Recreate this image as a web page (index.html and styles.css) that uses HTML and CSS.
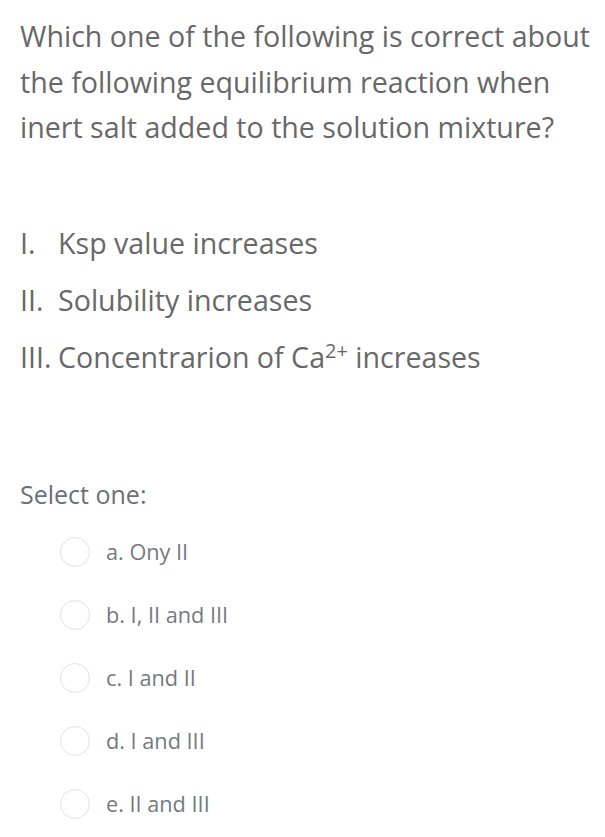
FILE: index.html
```html
<!DOCTYPE html>
<html>
<head>
<meta charset="utf-8">
<link rel="stylesheet" href="styles.css">
</head>
<body>
<div class="page">
  <p class="question">Which one of the following is correct about the following equilibrium reaction when inert salt added to the solution mixture?</p>
  <div class="statements">
    <p class="stmt"><span class="num">I.</span>Ksp value increases</p>
    <p class="stmt"><span class="num">II.</span>Solubility increases</p>
    <p class="stmt"><span class="num">III.</span>Concentrarion of Ca<sup>2+</sup> increases</p>
  </div>
  <p class="prompt">Select one:</p>
  <div class="options">
    <label class="option"><span class="radio"></span><span class="opt-text">a. Ony II</span></label>
    <label class="option"><span class="radio"></span><span class="opt-text">b. I, II and III</span></label>
    <label class="option"><span class="radio"></span><span class="opt-text">c. I and II</span></label>
    <label class="option"><span class="radio"></span><span class="opt-text">d. I and III</span></label>
    <label class="option"><span class="radio"></span><span class="opt-text">e. II and III</span></label>
  </div>
</div>
</body>
</html>
```
FILE: styles.css
```css
* { box-sizing: border-box; }
body {
  margin: 0;
  background: #fff;
  font-family: "Open Sans", "Noto Sans", sans-serif;
  color: #686868;
}
.page {
  padding: 13px 0 0 20px;
}
p { margin: 0; }
.question {
  font-size: 28.6px;
  line-height: 45.5px;
  width: 585px;
}
.statements {
  margin-top: 64px;
  display: flex;
  flex-direction: column;
}
.stmt {
  font-size: 28.6px;
  line-height: 57px;
  white-space: nowrap;
}
.num {
  display: inline-block;
  min-width: 38px;
  padding-right: 6px;
}
.stmt sup {
  font-size: 20px;
  line-height: 0;
  vertical-align: 10px;
}
.prompt {
  margin-top: 93px;
  font-size: 25px;
  line-height: 32px;
  color: #6b7076;
}
.options {
  margin-top: 27px;
  display: flex;
  flex-direction: column;
  gap: 33px;
  padding-left: 40px;
}
.option {
  display: flex;
  align-items: center;
  height: 30px;
}
.radio {
  width: 30px;
  height: 30px;
  border: 1.5px solid #e2e2e2;
  border-radius: 50%;
  flex: none;
}
.opt-text {
  margin-left: 16px;
  font-size: 21.7px;
  color: #737a80;
}
```
